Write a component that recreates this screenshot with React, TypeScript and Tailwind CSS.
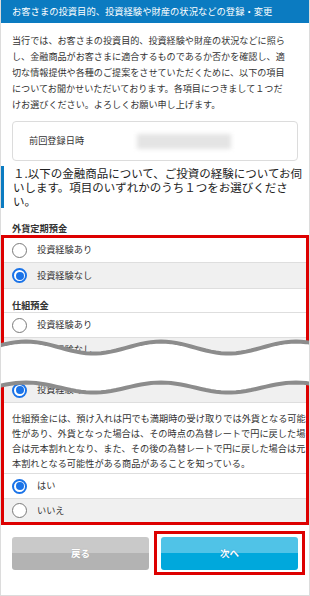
import React from 'react';

// Radio drawn like the native control in the screenshot
const Radio = ({ checked }: { checked?: boolean }) =>
  checked ? (
    <span className="flex items-center justify-center w-[15px] h-[15px] rounded-full border-2 border-[#1a73e8] bg-white shrink-0">
      <span className="w-[8px] h-[8px] rounded-full bg-[#1a73e8]" />
    </span>
  ) : (
    <span className="w-[15px] h-[15px] rounded-full border border-[#7a7a7a] bg-white shrink-0" />
  );

const Option = ({ label, checked, gray, top }: { label: string; checked?: boolean; gray?: boolean; top?: boolean }) => (
  <div
    className={`flex items-center gap-[10px] h-[25px] pl-[8px] text-[9.2px] ${gray ? 'bg-[#f0f0f0]' : 'bg-white'} ${
      top ? 'border-t border-[#dedede]' : ''
    }`}
  >
    <Radio checked={checked} />
    <span>{label}</span>
  </div>
);

// sine-ish wave used for the "cut" mark
const wave = (c: number, a: number) => {
  const pts: string[] = [];
  for (let x = -5; x <= 315; x += 5) {
    const y = c - a * Math.cos((2 * Math.PI * (x - 25)) / 135);
    pts.push(`${x},${y.toFixed(2)}`);
  }
  return pts;
};

const Cut = () => {
  const up = wave(11.5, 6);
  const low = wave(51.5, 5);
  const fill = [...up, ...[...low].reverse()].join(' ');
  return (
    <svg className="absolute left-0 top-[336px]" width="310" height="62" viewBox="0 0 310 62">
      <polygon points={fill} fill="#fff" />
      <polyline points={up.join(' ')} fill="none" stroke="#8c8c8c" strokeWidth="4" />
      <polyline points={low.join(' ')} fill="none" stroke="#8c8c8c" strokeWidth="4" />
    </svg>
  );
};

export default function App() {
  return (
    <div className="relative w-[310px] h-[596px] overflow-hidden bg-white border-x border-b border-[#dcdcdc] text-[#333] font-['Noto_Sans_CJK_JP',sans-serif]">
      {/* Header */}
      <div className="h-[23px] bg-[#0b7bc1] text-white text-[9.3px] flex items-center pl-[11px] whitespace-nowrap">
        お客さまの投資目的、投資経験や財産の状況などの登録・変更
      </div>

      {/* Intro */}
      <div className="px-[11px] pt-[9px] text-[9.1px] leading-[16px] whitespace-nowrap">
        <div>当行では、お客さまの投資目的、投資経験や財産の状況などに照ら</div>
        <div>し、金融商品がお客さまに適合するものであるか否かを確認し、適</div>
        <div>切な情報提供や各種のご提案をさせていただくために、以下の項目</div>
        <div>についてお聞かせいただいております。各項目につきまして１つだ</div>
        <div>けお選びください。よろしくお願い申し上げます。</div>
      </div>

      {/* Previous registration */}
      <div className="mx-[11px] mt-[9px] h-[40px] border border-[#dcdcdc] rounded-[4px] flex items-center pl-[16px] text-[9.2px]">
        <span className="w-[108px]">前回登録日時</span>
        <span className="w-[94px] h-[15px] bg-[#e4e4e4] blur-[2px]" />
      </div>

      {/* Question */}
      <div className="mt-[5px] border-l-[3px] border-[#0b7bc1] pl-[9px] text-[11.5px] leading-[14px] text-[#222] whitespace-nowrap">
        <div>１.以下の金融商品について、ご投資の経験についてお伺</div>
        <div>いします。項目のいずれかのうち１つをお選びくださ</div>
        <div>い。</div>
      </div>

      <div className="pl-[11px] pt-[13px] h-[27px] text-[9.2px] font-bold leading-[14px]">外貨定期預金</div>

      {/* Answers */}
      <div className="border-[3px] border-[#dd0000]">
        <div className="h-[24px] flex items-center gap-[10px] pl-[8px] text-[9.2px]">
          <Radio />
          <span>投資経験あり</span>
        </div>
        <div className="border-y border-[#dedede]">
          <Option label="投資経験なし" checked gray />
        </div>
        <div className="pl-[8px] pt-[9px] h-[23px] text-[9.2px] font-bold leading-[14px]">仕組預金</div>
        <Option label="投資経験あり" top />
        <Option label="投資経験なし" gray top />
        <div className="h-[15px]" />
        <div className="border-b border-[#dedede]">
          <Option label="投資経験あり" checked gray top />
        </div>
        <div className="pl-[8px] pt-[8px] pb-[2px] text-[9.2px] leading-[15px] whitespace-nowrap">
          <div>仕組預金には、預け入れは円でも満期時の受け取りでは外貨となる可能</div>
          <div>性があり、外貨となった場合は、その時点の為替レートで円に戻した場</div>
          <div>合は元本割れとなり、また、その後の為替レートで円に戻した場合は元</div>
          <div>本割れとなる可能性がある商品があることを知っている。</div>
        </div>
        <Option label="はい" checked top />
        <div className="border-t border-[#dedede] bg-[#f0f0f0] h-[24px] flex items-center gap-[10px] pl-[8px] text-[9.2px]">
          <Radio />
          <span>いいえ</span>
        </div>
      </div>

      {/* Buttons */}
      <div className="flex items-start gap-[5px] pl-[11px] mt-[6px]">
        <button className="mt-[6px] w-[137px] h-[33px] rounded-[3px] bg-[linear-gradient(#c9c9c9_50%,#b3b3b3_50%)] text-white text-[9.5px] font-bold [text-shadow:0_0_1px_#999]">
          戻る
        </button>
        <div className="border-[3px] border-[#dd0000] pt-[3px] pb-[2px] px-[4px]">
          <button className="block w-[137px] h-[33px] rounded-[3px] bg-[linear-gradient(#50c3e7_50%,#00a8dc_50%)] text-white text-[9.5px] font-bold [text-shadow:0_0_1px_#0b7bc1]">
            次へ
          </button>
        </div>
      </div>

      <Cut />
    </div>
  );
}
